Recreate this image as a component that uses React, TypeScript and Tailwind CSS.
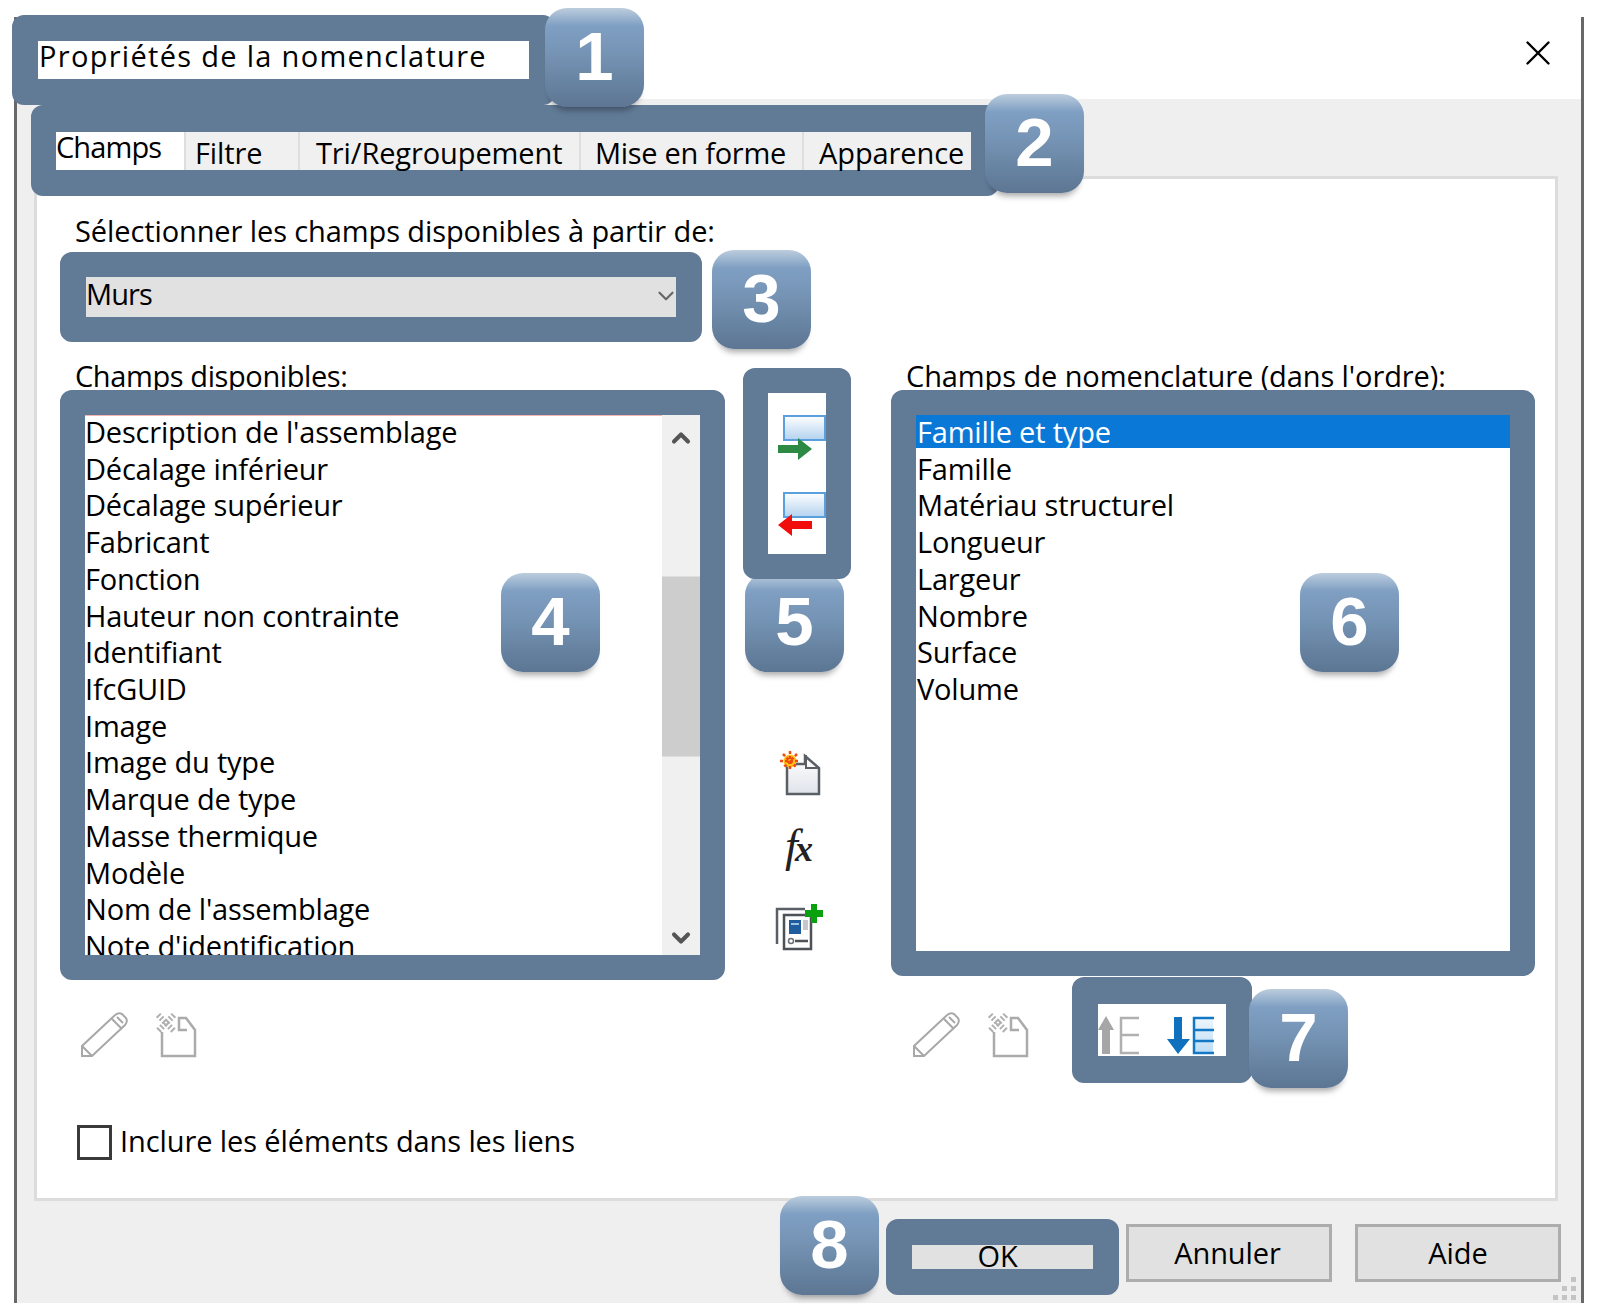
import { ReactNode } from "react";
import { X, ChevronDown, ChevronUp } from "lucide-react";

const available = [
  "Description de l'assemblage",
  "Décalage inférieur",
  "Décalage supérieur",
  "Fabricant",
  "Fonction",
  "Hauteur non contrainte",
  "Identifiant",
  "IfcGUID",
  "Image",
  "Image du type",
  "Marque de type",
  "Masse thermique",
  "Modèle",
  "Nom de l'assemblage",
  "Note d'identification",
];

const scheduled = [
  "Famille et type",
  "Famille",
  "Matériau structurel",
  "Longueur",
  "Largeur",
  "Nombre",
  "Surface",
  "Volume",
];

const tabs = [
  { label: "Champs", cls: "w-[128px] bg-white leading-[30px] tracking-[-0.9px]" },
  { label: "Filtre", cls: "w-[114px] pl-[9px] pt-[3px] leading-[36px] border-l-2 border-[#dedede]" },
  { label: "Tri/Regroupement", cls: "w-[281px] pl-[16px] pt-[3px] leading-[36px] border-l-2 border-[#dedede]" },
  { label: "Mise en forme", cls: "w-[223px] pl-[14px] pt-[3px] leading-[36px] tracking-[-0.3px] border-l-2 border-[#dedede]" },
  { label: "Apparence", cls: "w-[169px] pl-[15px] pt-[3px] leading-[36px] border-l-2 border-[#dedede]" },
];

function Badge({ n, className }: { n: number; className: string }) {
  return (
    <div
      className={`absolute z-30 flex h-[99px] w-[99px] items-center justify-center rounded-[22px] bg-[linear-gradient(#bccddd_0%,#7f9fc3_18%,#7694b5_45%,#5c7693_100%)] pb-[3px] font-['Liberation_Sans',sans-serif] text-[69px] leading-none font-bold tracking-normal text-white shadow-[0_8px_6px_-5px_rgba(0,0,0,0.35)] ${className}`}
    >
      {n}
    </div>
  );
}

function PencilIcon() {
  return (
    <svg width="48" height="46" viewBox="0 0 48 46" fill="none" stroke="#a8a8a8" strokeWidth="2">
      <path d="M2 44V34L34 4Q38 0 42 2L46 6Q48 10 45 13L12 44Z" />
      <path d="M2 34L12 44M32 7L42 17M37 5L43 11" />
    </svg>
  );
}

function DeletePageIcon() {
  return (
    <svg width="42" height="46" viewBox="0 0 42 46" fill="none">
      <path d="M7 20V44H40V18L31 6H24V18H32" stroke="#ababab" strokeWidth="2.5" />
      <path d="M3 3L19 19M19 3L3 19" stroke="#b0b0b0" strokeWidth="6" strokeDasharray="2 2" />
    </svg>
  );
}

function Toolbar() {
  return (
    <div className="flex gap-[27px]">
      <PencilIcon />
      <DeletePageIcon />
    </div>
  );
}

function TransferIcons() {
  return (
    <svg width="58" height="160" viewBox="0 0 58 160">
      <defs>
        <linearGradient id="fieldFill" x1="0" y1="0" x2="0" y2="1">
          <stop offset="0" stopColor="#ffffff" />
          <stop offset="1" stopColor="#b3d2ef" />
        </linearGradient>
      </defs>
      <rect x="16" y="23" width="41" height="24" fill="url(#fieldFill)" stroke="#5b9fdc" strokeWidth="2" />
      <path d="M10 52H30V45L44 56L30 67V60H10Z" fill="#2d8a45" />
      <rect x="16" y="100" width="41" height="24" fill="url(#fieldFill)" stroke="#5b9fdc" strokeWidth="2" />
      <path d="M44 128H24V121L10 132L24 143V136H44Z" fill="#f20d0d" />
    </svg>
  );
}

function NewParamIcon() {
  return (
    <svg width="42" height="46" viewBox="0 0 42 46">
      <defs>
        <linearGradient id="pageFill" x1="0" y1="0" x2="0" y2="1">
          <stop offset="0" stopColor="#ffffff" />
          <stop offset="1" stopColor="#dfe3ea" />
        </linearGradient>
      </defs>
      <path d="M8 14H26V6L40 18V44H8Z" fill="url(#pageFill)" stroke="#5a5f66" strokeWidth="2.5" />
      <path d="M27 5V18H40" fill="none" stroke="#5a5f66" strokeWidth="2" />
      <circle cx="11" cy="11" r="6.5" fill="#ffc21a" />
      <path d="M11 1V21M1 11H21M4 4L18 18M18 4L4 18" stroke="#f04a12" strokeWidth="2.5" strokeDasharray="3 2" />
    </svg>
  );
}

function AddParamIcon() {
  return (
    <svg width="48" height="47" viewBox="0 0 48 47" fill="none">
      <path d="M2 40V5H30" stroke="#5a5f66" strokeWidth="2.5" />
      <path d="M9 11H36V45H9Z" fill="#fdfdfd" stroke="#4d5259" strokeWidth="2.5" />
      <rect x="14" y="16" width="12" height="14" fill="#1f5c9e" />
      <rect x="16" y="19" width="8" height="2" fill="#9cc0e4" />
      <rect x="28" y="16" width="5" height="10" fill="#c4c7cc" />
      <circle cx="16" cy="37" r="2.5" stroke="#6a7078" strokeWidth="1.5" />
      <path d="M20 37H33" stroke="#4d5259" strokeWidth="2.5" />
      <path d="M36 0H42V6H48V13H42V19H36V13H30V6H36Z" fill="#0aa10f" />
    </svg>
  );
}

function OrderIcons() {
  return (
    <svg width="128" height="52" viewBox="0 0 128 52">
      <defs>
        <linearGradient id="rowFill" x1="0" y1="0" x2="0" y2="1">
          <stop offset="0" stopColor="#eef6fd" />
          <stop offset="1" stopColor="#bcdcf5" />
        </linearGradient>
      </defs>
      <path d="M8 12L0 26H4V50H12V26H16Z" fill="#a6a6a6" />
      <path d="M41 14H23V49H41M23 31H41" fill="none" stroke="#b0b0b0" strokeWidth="2.5" />
      <path d="M76 13H84V35H92L80 50L69 35H76Z" fill="#0f70bd" />
      <rect x="96" y="14" width="19" height="35" fill="url(#rowFill)" />
      <path d="M116 14H96V49H116M96 26H116M96 37H116" fill="none" stroke="#1278c6" strokeWidth="2.5" />
    </svg>
  );
}

function ListRow({ children, selected }: { children: ReactNode; selected?: boolean }) {
  return (
    <div
      className={`h-[36.72px] whitespace-nowrap leading-[33px] tracking-[-0.2px] ${
        selected ? "bg-[linear-gradient(#0a78d7_33px,transparent_33px)] text-white" : ""
      }`}
    >
      {children}
    </div>
  );
}

export default function App() {
  return (
    <div className="relative h-[1314px] w-[1606px] overflow-hidden bg-white pt-[17px] pl-[14px] font-['Open_Sans',sans-serif] text-[29px] tracking-[-0.1px] text-black">
      <div className="flex h-[1286px] w-[1570px] flex-col border-r-[3px] border-l-[3px] border-[#686868]">
        {/* title bar */}
        <div className="relative flex h-[82px] items-start justify-between">
          <div className="relative z-10 -mt-[2px] -ml-[5px] h-[90px] w-[543px] rounded-[12px] border-[26px] border-[#617a96] bg-white">
            <div className="-mt-[5px] ml-[1px] leading-[40px] tracking-[1.3px]">Propriétés de la nomenclature</div>
          </div>
          <X className="mt-[15px] mr-[22px] h-[42px] w-[42px] text-black" strokeWidth={1.4} />
        </div>

        {/* gray body */}
        <div className="flex flex-1 flex-col bg-[#efefef]">
          <div className="relative z-10 h-[77px] pt-[6px] pl-[14px]">
            <div className="h-[91px] w-[968px] rounded-[12px] border-t-[27px] border-r-[28px] border-b-[26px] border-l-[25px] border-[#617a96] bg-[#f0f0f0]">
              <div className="flex h-[38px]">
                {tabs.map((t) => (
                  <div key={t.label} className={`whitespace-nowrap ${t.cls}`}>
                    {t.label}
                  </div>
                ))}
              </div>
            </div>
          </div>

          {/* panel */}
          <div className="ml-[17px] flex h-[1025px] w-[1524px] flex-col border-[3px] border-[#dcdcdc] bg-white pt-[34px] pl-[23px]">
            <div className="ml-[15px] h-[36px] leading-[36px]">Sélectionner les champs disponibles à partir de:</div>
            <div className="mt-[3px] h-[90px] w-[642px] rounded-[12px] border-x-[26px] border-y-[25px] border-[#617a96]">
              <div className="flex h-[40px] items-center justify-between bg-[#e1e1e1] pb-[6px] tracking-[-0.9px]">
                <span>Murs</span>
                <ChevronDown className="-mr-[3px] mt-[4px] h-[26px] w-[26px] text-[#666]" strokeWidth={2} />
              </div>
            </div>

            <div className="mt-[16px] flex h-[766px] items-start">
              {/* available fields */}
              <div className="w-[665px]">
                <div className="ml-[15px] h-[36px] leading-[36px] tracking-[-0.4px]">Champs disponibles:</div>
                <div className="relative z-10 -mt-[4px] flex h-[590px] rounded-[12px] border-[25px] border-[#617a96]">
                  <div className="h-full flex-1 overflow-hidden bg-white shadow-[inset_0_1px_#f3b6ae]">
                    {available.map((f) => (
                      <ListRow key={f}>{f}</ListRow>
                    ))}
                  </div>
                  <div className="flex h-full w-[38px] flex-col bg-[#f0f0f0]">
                    <ChevronUp className="mx-auto mt-[9px] h-[28px] w-[28px] text-[#555]" strokeWidth={3.5} />
                    <div className="mt-[124px] h-[181px] w-full border-y border-[#dedede] bg-[#cdcdcd]" />
                    <ChevronDown className="mx-auto mt-[167px] h-[28px] w-[28px] text-[#555]" strokeWidth={3.5} />
                  </div>
                </div>
                <div className="mt-[32px] ml-[20px]">
                  <Toolbar />
                </div>
              </div>

              {/* transfer and parameter buttons */}
              <div className="mt-[10px] ml-[18px] flex w-[108px] flex-col items-center">
                <div className="relative z-40 h-[211px] w-[108px] rounded-[12px] border-[25px] border-[#617a96] bg-white">
                  <TransferIcons />
                </div>
                <div className="mt-[171px] ml-[6px]">
                  <NewParamIcon />
                </div>
                <div className="mt-[32px] ml-[1px] h-[40px] font-['Liberation_Serif',serif] leading-[36px] tracking-[-3px] text-[#222] italic">
                  <span className="text-[46px]">f</span>
                  <span className="text-[36px] font-bold">x</span>
                </div>
                <div className="mt-[36px] ml-[4px]">
                  <AddParamIcon />
                </div>
              </div>

              {/* schedule fields */}
              <div className="ml-[40px] w-[644px]">
                <div className="ml-[15px] h-[36px] leading-[36px]">Champs de nomenclature (dans l'ordre):</div>
                <div className="relative z-10 -mt-[4px] h-[586px] rounded-[12px] border-[25px] border-[#617a96] bg-white">
                  {scheduled.map((f, i) => (
                    <ListRow key={f} selected={i === 0}>
                      <span className="pl-[1px]">{f}</span>
                    </ListRow>
                  ))}
                </div>
                <div className="relative flex items-start">
                  <div className="mt-[36px] ml-[21px]">
                    <Toolbar />
                  </div>
                  <div className="relative z-20 mt-[1px] ml-[43px] h-[106px] w-[180px] rounded-[12px] border-t-[27px] border-r-[26px] border-b-[27px] border-l-[26px] border-[#617a96] bg-white">
                    <OrderIcons />
                  </div>
                </div>
              </div>
            </div>

            <div className="ml-[17px] flex h-[36px] items-center gap-[8px]">
              <div className="h-[35px] w-[35px] border-[3px] border-[#3a3a3a] bg-white" />
              <span className="-mt-[3px]">Inclure les éléments dans les liens</span>
            </div>
          </div>

          {/* footer */}
          <div className="relative flex flex-1 items-start pt-[18px] pl-[869px]">
            <div className="z-10 h-[76px] w-[233px] rounded-[12px] border-[26px] border-[#617a96] bg-[#e1e1e1] text-center leading-[22px]">
              <span className="-ml-[10px]">OK</span>
            </div>
            <div className="mt-[5px] ml-[7px] flex h-[58px] w-[206px] items-center justify-center border-[3px] border-[#adadad] bg-[#e1e1e1] pr-[3px]">
              Annuler
            </div>
            <div className="mt-[5px] ml-[23px] flex h-[58px] w-[206px] items-center justify-center border-[3px] border-[#adadad] bg-[#e1e1e1]">
              Aide
            </div>
            {/* resize grip */}
            <div className="absolute right-[5px] bottom-[3px] grid grid-cols-3 gap-[4px]">
              {[0, 0, 1, 0, 1, 1, 1, 1, 1].map((on, i) => (
                <div key={i} className={`h-[5px] w-[5px] ${on ? "bg-[#c4c4c4]" : ""}`} />
              ))}
            </div>
          </div>
        </div>
      </div>

      <Badge n={1} className="left-[545px] top-[8px]" />
      <Badge n={2} className="left-[985px] top-[94px]" />
      <Badge n={3} className="left-[712px] top-[250px]" />
      <Badge n={4} className="left-[501px] top-[573px]" />
      <Badge n={5} className="left-[745px] top-[573px]" />
      <Badge n={6} className="left-[1300px] top-[573px]" />
      <Badge n={7} className="left-[1249px] top-[989px]" />
      <Badge n={8} className="left-[780px] top-[1196px]" />
    </div>
  );
}
